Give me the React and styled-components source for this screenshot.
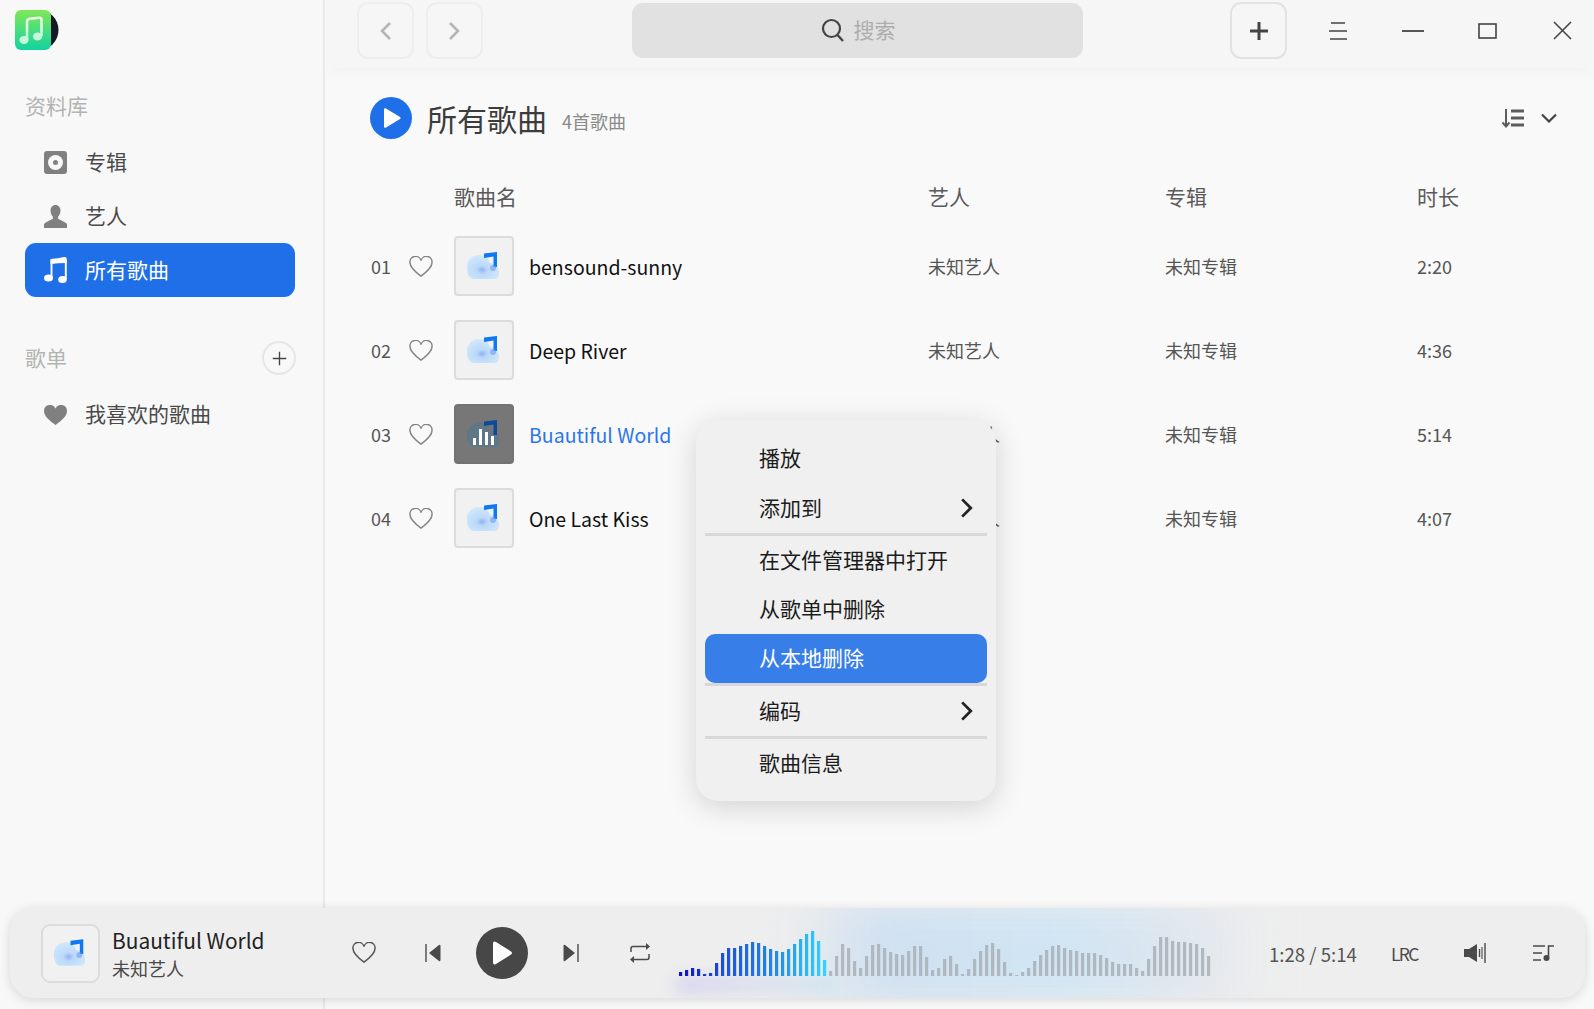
import React from 'react';
import styled, { createGlobalStyle } from 'styled-components';

const GlobalStyle = createGlobalStyle`
  html, body { margin: 0; height: 100%; overflow: hidden; }
  body { font-family: "Noto Sans CJK SC", "Noto Sans", sans-serif; background: #f9f9f9; color: #111; }
  * { box-sizing: border-box; }
`;

const Page = styled.div`
  position: relative;
  display: grid;
  grid-template-columns: 326px 1fr;
  width: 1594px;
  height: 1009px;
  overflow: hidden;
`;

/* sidebar */
const Sidebar = styled.aside`
  margin-right: 1px;
  background: #f8f8f8;
  border-right: 2px solid #e9e9e9;
  padding: 10px 0 0 25px;
`;
const Logo = styled.div`
  height: 40px;
  margin-left: -10px;
  margin-bottom: 42px;
`;
const SectionLabel = styled.div`
  height: 30px;
  line-height: ${p => p.$line || 27}px;
  font-size: 21px;
  color: #b3b3b3;
`;
const SectionRow = styled.div`
  display: flex;
  align-items: center;
  justify-content: space-between;
  width: 271px;
  height: 34px;
  margin-top: 44px;
`;
const AddRound = styled.div`
  width: 34px;
  height: 34px;
  border-radius: 50%;
  border: 2px solid #e6e6e6;
  display: flex;
  align-items: center;
  justify-content: center;
`;
const NavList = styled.nav`
  margin-top: 13px;
`;
const NavItem = styled.div`
  display: flex;
  align-items: center;
  gap: 18px;
  width: 270px;
  height: 54px;
  padding-left: 19px;
  border-radius: 11px;
  font-size: 21px;
  color: ${p => (p.$active ? '#fff' : '#4a4a4a')};
  background: ${p => (p.$active ? '#1f6fe8' : 'transparent')};
`;
const NavText = styled.span`
  margin-top: ${p => p.$lift || -3}px;
`;

/* main column */
const Main = styled.main`
  min-width: 0;
  overflow: hidden;
`;
const TopBar = styled.header`
  display: flex;
  align-items: flex-start;
  height: 68px;
  padding: 2px 0 0 31px;
  background: #f6f6f6;
  box-shadow: 0 4px 14px rgba(0, 0, 0, 0.035);
`;
const NavButton = styled.div`
  width: 57px;
  height: 57px;
  flex: none;
  margin-left: ${p => p.$gap || 0}px;
  border: 2px solid ${p => (p.$strong ? '#e2e2e2' : '#eeeeee')};
  border-radius: 11px;
  display: flex;
  align-items: center;
  justify-content: center;
`;
const SearchBox = styled.div`
  width: 451px;
  height: 55px;
  flex: none;
  margin: 1px 147px 0 149px;
  border-radius: 11px;
  background: #e1e1e1;
  display: flex;
  align-items: center;
  justify-content: center;
  gap: 9px;
  padding-left: 1px;
  font-size: 21px;
  color: #adadad;
`;
const SearchText = styled.span`
  margin-top: -3px;
`;
const WinButton = styled.div`
  width: 75px;
  height: 57px;
  flex: none;
  margin-left: ${p => p.$gap || 0}px;
  display: flex;
  align-items: center;
  justify-content: center;
`;
const TitleRow = styled.div`
  display: flex;
  align-items: center;
  height: 42px;
  margin-top: 29px;
  padding: 0 37px 0 44px;
`;
const PlayAll = styled.div`
  width: 42px;
  height: 42px;
  border-radius: 50%;
  background: #1f6fe8;
  display: flex;
  align-items: center;
  justify-content: center;
  padding-left: 3px;
  margin-right: 15px;
`;
const PageTitle = styled.h1`
  margin: 0 15px 0 0;
  font-size: 30px;
  font-weight: 400;
  color: #3c3c3c;
`;
const SongCount = styled.span`
  margin-top: 6px;
  font-size: 18px;
  color: #8a8a8a;
`;
const SortBox = styled.div`
  margin-left: auto;
  display: flex;
  align-items: center;
  gap: 16px;
`;
const HeadRow = styled.div`
  display: grid;
  grid-template-columns: 474px 237px 252px 1fr;
  height: 30px;
  margin: 44px 0 11px;
  padding-left: 128px;
  line-height: 27px;
  font-size: 21px;
  color: #5a5a5a;
`;
const SongRow = styled.div`
  display: grid;
  grid-template-columns: 38px 45px 75px 399px 237px 252px 1fr;
  align-items: center;
  height: 84px;
  padding-left: 45px;
  font-size: 18px;
  color: #555;
  & > svg {
    margin-top: 2px;
  }
`;
const Cell = styled.div`
  margin-top: -1px;
`;
const SongTitle = styled.div`
  font-size: 19.5px;
  color: ${p => (p.$playing ? '#2a75ee' : '#111')};
`;
const Cover = styled.div`
  width: ${p => p.$size || 60}px;
  height: ${p => p.$size || 60}px;
  flex: none;
  border-radius: ${p => (p.$round ? 9 : 4)}px;
  border: 2px solid ${p => (p.$playing ? '#737373' : '#dcdcdc')};
  background: ${p => (p.$playing ? '#777777' : '#f1f1f1')};
  display: flex;
  align-items: center;
  justify-content: center;
`;

/* context menu */
const Menu = styled.div`
  position: absolute;
  left: 696px;
  top: 420px;
  width: 300px;
  height: 381px;
  padding: 14px 9px 12px;
  border-radius: 22px;
  background: #f0f0f0;
  box-shadow: 0 6px 30px rgba(0, 0, 0, 0.16);
`;
const MenuItem = styled.div`
  display: flex;
  align-items: center;
  justify-content: space-between;
  height: ${p => p.$height || 49}px;
  padding: 0 13px 0 54px;
  border-radius: 10px;
  font-size: 21px;
  color: ${p => (p.$active ? '#fff' : '#1c1c1c')};
  background: ${p => (p.$active ? '#387ee8' : 'transparent')};
`;
const MenuText = styled.span`
  margin-top: -3px;
`;
const MenuLine = styled.div`
  height: 3px;
  background: #d8d8d8;
`;

/* player */
const Player = styled.footer`
  position: absolute;
  left: 10px;
  top: 908px;
  width: 1575px;
  height: 90px;
  display: flex;
  align-items: center;
  padding-left: 31px;
  border-radius: 24px;
  background: #eeeeee;
  box-shadow: 0 2px 12px rgba(0, 0, 0, 0.14);
  overflow: hidden;
`;
const Glow = styled.div`
  position: absolute;
  left: ${p => p.$left}px;
  top: ${p => p.$top}px;
  width: ${p => p.$width}px;
  height: ${p => p.$height}px;
  background: ${p => p.$bg};
  filter: blur(${p => p.$blur}px);
`;
const TrackInfo = styled.div`
  position: relative;
  width: 217px;
  margin-left: 12px;
  flex: none;
`;
const TrackName = styled.div`
  font-size: 20.9px;
  line-height: 30px;
  color: #222;
`;
const TrackArtist = styled.div`
  font-size: 18px;
  line-height: 26px;
  color: #4a4a4a;
`;
const Control = styled.div`
  position: relative;
  width: 69px;
  flex: none;
  display: flex;
  justify-content: center;
`;
const PlayButton = styled.div`
  width: 52px;
  height: 52px;
  border-radius: 50%;
  background: #474747;
  display: flex;
  align-items: center;
  justify-content: center;
  padding-left: 3px;
`;
const Wave = styled.svg`
  position: relative;
  flex: none;
  margin-left: 5px;
`;
const TimeText = styled.div`
  position: relative;
  flex: none;
  width: 86px;
  margin-left: 56px;
  font-size: 18.6px;
  color: #555;
  white-space: nowrap;
`;
const LrcText = styled.div`
  position: relative;
  flex: none;
  width: 25px;
  margin-left: 36px;
  font-size: 17.5px;
  color: #4a4a4a;
  letter-spacing: -1.7px;
  white-space: nowrap;
`;
const PlayerIcon = styled.div`
  position: relative;
  flex: none;
  display: flex;
  margin-left: ${p => p.$gap}px;
`;

/* drawings */
const LogoIcon = () => (
  <svg width="46" height="40" viewBox="0 0 46 40">
    <defs>
      <linearGradient id="logoFill" x1="0" y1="0" x2="0" y2="1">
        <stop offset="0" stopColor="#7fe858" />
        <stop offset="1" stopColor="#12d3a0" />
      </linearGradient>
      <linearGradient id="logoNote" x1="0" y1="0" x2="0" y2="1">
        <stop offset="0" stopColor="#f0fdea" />
        <stop offset="1" stopColor="#bdf3dc" />
      </linearGradient>
    </defs>
    <circle cx="23.5" cy="20" r="20" fill="#141a24" />
    <rect width="36" height="40" rx="6" fill="url(#logoFill)" />
    <path d="M12 30V12q0-3 3-3.300l9-1q2.500-.2 2.500 2.300V26" fill="none" stroke="url(#logoNote)" strokeWidth="2.600" />
    <ellipse cx="9" cy="30" rx="4.600" ry="4" fill="#c8f5de" />
    <ellipse cx="22.500" cy="26.500" rx="4.600" ry="4" fill="#c8f5de" />
  </svg>
);
const DiscIcon = () => (
  <svg width="23" height="23" viewBox="0 0 23 23">
    <rect width="23" height="23" rx="3" fill="#808080" />
    <circle cx="11.500" cy="11.500" r="7.500" fill="#f8f8f8" />
    <circle cx="11.500" cy="11.500" r="2.500" fill="#808080" />
  </svg>
);
const PersonIcon = () => (
  <svg width="23" height="23" viewBox="0 0 23 23">
    <path d="M11.500 0c3.200 0 5 2.500 5 5.600 0 2.600-1 4.800-2.400 6.100v1.500c0 1.300 5.300 2.300 8.400 5.300 1 1 1 2.500 1 4.500H-.5c0-2 0-3.500 1-4.500 3.100-3 8.400-4 8.400-5.300v-1.500C7.500 10.400 6.500 8.200 6.500 5.600c0-3.100 1.800-5.600 5-5.600z" fill="#808080" />
  </svg>
);
const NoteIcon = () => (
  <svg width="23" height="26" viewBox="0 0 23 26">
    <path d="M7.500 3v18M21.800 3v19" fill="none" stroke="#fff" strokeWidth="1.900" />
    <path d="M6.500 2Q14 1.500 20 0q2.800-.2 2.800 2v4Q14 6 6.500 7z" fill="#fff" />
    <ellipse cx="4.500" cy="21" rx="4.500" ry="3.600" fill="#fff" />
    <ellipse cx="18.500" cy="22.400" rx="4.300" ry="3.500" fill="#fff" />
  </svg>
);
const HeartFill = () => (
  <svg width="23" height="20" viewBox="0 0 23 20">
    <path d="M11.500 20C4 14.500 0 10.500 0 6a6 6 0 0 1 11.500-2.400A6 6 0 0 1 23 6c0 4.500-4 8.500-11.500 14z" fill="#808080" />
  </svg>
);
const HeartLine = ({ size = 24, color = '#858585' }) => (
  <svg width={size} height={size * 0.88} viewBox="0 0 24 21">
    <path d="M12 20C5 14.800 1 11 1 6.600A5.600 5.600 0 0 1 12 4.600 5.600 5.600 0 0 1 23 6.600C23 11 19 14.800 12 20z" fill="none" stroke={color} strokeWidth="1.500" />
  </svg>
);
const Plus = ({ size = 20, color = '#444', weight = 3 }) => (
  <svg width={size} height={size} viewBox="0 0 20 20">
    <path d="M10 1v18M1 10h18" stroke={color} strokeWidth={weight} />
  </svg>
);
const Chevron = ({ dir = 'right', color = '#b5b5b5', w = 13, h = 20, weight = 2.600 }) => (
  <svg width={w} height={h} viewBox="0 0 13 20">
    <path d={dir === 'left' ? 'M11 2L3 10l8 8' : 'M2 2l8 8-8 8'} fill="none" stroke={color} strokeWidth={weight} />
  </svg>
);
const SearchIcon = () => (
  <svg width="24" height="25" viewBox="0 0 24 25">
    <circle cx="10.500" cy="10.500" r="8.500" fill="none" stroke="#444" strokeWidth="2.200" />
    <path d="M16.500 17l5.500 6" stroke="#444" strokeWidth="2.400" />
  </svg>
);
const MenuIcon = () => (
  <svg width="20" height="18" viewBox="0 0 20 18">
    <path d="M3 1h14M1 9h18M2 17h17" stroke="#444" strokeWidth="1.600" />
  </svg>
);
const MinIcon = () => (
  <svg width="22" height="4" viewBox="0 0 22 4">
    <path d="M0 2h22" stroke="#444" strokeWidth="1.800" />
  </svg>
);
const MaxIcon = () => (
  <svg width="19" height="16" viewBox="0 0 19 16">
    <rect x="1" y="1" width="17" height="14" fill="none" stroke="#444" strokeWidth="1.600" />
  </svg>
);
const CloseIcon = () => (
  <svg width="19" height="19" viewBox="0 0 19 19">
    <path d="M1 1l17 17M18 1L1 18" stroke="#444" strokeWidth="1.600" />
  </svg>
);
const SortIcon = () => (
  <svg width="24" height="20" viewBox="0 0 24 20">
    <path d="M5 1v17M1.500 14.500L5 18.500l3.500-4" fill="none" stroke="#5c5c5c" strokeWidth="2" />
    <path d="M10 3h13M10 10h13M10 17h13" stroke="#5c5c5c" strokeWidth="3" />
  </svg>
);
const DownIcon = () => (
  <svg width="16" height="10" viewBox="0 0 16 10">
    <path d="M1 1.500l7 7 7-7" fill="none" stroke="#444" strokeWidth="2.200" />
  </svg>
);
const CloudArt = ({ playing, idPrefix }) => (
  <svg width="56" height="56" viewBox="2 2 56 56">
    <defs>
      <radialGradient id={`${idPrefix}Cloud`} cx="0.470" cy="0.620" r="0.680">
        <stop offset="0" stopColor="#8fb0f4" />
        <stop offset="0.250" stopColor="#bcd8f9" />
        <stop offset="1" stopColor="#d2ebfc" />
      </radialGradient>
    </defs>
    <path d="M20 43C15 43 13 37 13 31 13 24 18 19 25 19 31 19 34 22 36 27 41 27 45 31 45 37 45 41 43 43 40 43Z" fill={playing ? '#5e7887' : `url(#${idPrefix}Cloud)`} />
    <path d="M30 17.500l13-1.500V31h-3.500v-10.500L30 22z" fill={playing ? '#0d4a98' : '#0d78f2'} />
    {playing ? (
      <path d="M19 41v-7h3v7zM25 41V25h3v16zM31 41V28h3v13zM37 41V32h3v9z" fill="#fff" />
    ) : (
      <circle cx="39" cy="32" r="3" fill="#6c9cf0" opacity="0.600" />
    )}
  </svg>
);
const PrevIcon = () => (
  <svg width="16" height="18" viewBox="0 0 16 18">
    <path d="M1 0v18" stroke="#4a4a4a" strokeWidth="1.400" />
    <path d="M4 9l10-8q1.500-.6 1.500 1v14q0 1.600-1.500 1z" fill="#4a4a4a" />
  </svg>
);
const NextIcon = () => (
  <svg width="16" height="18" viewBox="0 0 16 18">
    <path d="M15 0v18" stroke="#4a4a4a" strokeWidth="1.400" />
    <path d="M12 9L2 1Q.5.400.5 2v14q0 1.600 1.500 1z" fill="#4a4a4a" />
  </svg>
);
const RepeatIcon = () => (
  <svg width="20" height="20" viewBox="0 0 20 20">
    <path d="M1 9V5.500q0-2 2-2h15M19 11v3.500q0 2-2 2H2" fill="none" stroke="#4a4a4a" strokeWidth="1.500" />
    <path d="M16 0l4 3.500-4 3.500zM4 13l-4 3.500L4 20z" fill="#4a4a4a" />
  </svg>
);
const VolumeIcon = () => (
  <svg width="22" height="20" viewBox="0 0 22 20">
    <path d="M0 6h5l8-5v18l-8-5H0z" fill="#4a4a4a" />
    <path d="M15.500 6v8M21 0v20" stroke="#4a4a4a" strokeWidth="1.400" />
    <path d="M18 4v12" stroke="#4a4a4a" strokeWidth="1.100" />
  </svg>
);
const QueueIcon = () => (
  <svg width="21" height="16" viewBox="0 0 21 16">
    <path d="M0 1h12M0 8h9M0 15h8" stroke="#4a4a4a" strokeWidth="1.500" />
    <path d="M15.500 12V1H21" fill="none" stroke="#4a4a4a" strokeWidth="1.600" />
    <circle cx="13.500" cy="13" r="3" fill="#4a4a4a" />
  </svg>
);

const waveHeights = [
  4, 6, 8, 7, 2, 3, 13, 23, 28, 28, 30, 32, 34, 33, 30, 27, 25, 24, 27, 32, 37, 42, 45, 35, 16,
  5, 20, 32, 28, 15, 8, 20, 31, 32, 28, 24, 22, 21, 25, 30, 30, 19, 6, 8, 17, 20, 12, 2, 7, 17,
  25, 31, 33, 27, 14, 3, 1, 4, 8, 15, 21, 26, 30, 31, 28, 26, 25, 23, 23, 23, 21, 18, 14, 12, 12,
  12, 8, 5, 17, 30, 39, 39, 35, 34, 34, 33, 32, 28, 20,
];
const playedBars = 25;

const WaveForm = () => (
  <Wave width="534" height="50" viewBox="0 0 534 50">
    <defs>
      <linearGradient id="wavePlayed" gradientUnits="userSpaceOnUse" x1="0" y1="0" x2="147" y2="0">
        <stop offset="0" stopColor="#0e10c6" />
        <stop offset="0.300" stopColor="#1a4fe0" />
        <stop offset="0.650" stopColor="#2088ec" />
        <stop offset="1" stopColor="#30d6ff" />
      </linearGradient>
    </defs>
    {waveHeights.map((h, i) => (
      <rect
        key={i}
        x={i * 6}
        y={48 - h}
        width="3.200"
        height={h}
        fill={i < playedBars ? 'url(#wavePlayed)' : '#a9afb6'}
        fillOpacity={i < playedBars ? 1 : 0.85}
      />
    ))}
  </Wave>
);

const songs = [
  { no: '01', title: 'bensound-sunny', time: '2:20' },
  { no: '02', title: 'Deep River', time: '4:36' },
  { no: '03', title: 'Buautiful World', time: '5:14', playing: true },
  { no: '04', title: 'One Last Kiss', time: '4:07' },
];

const menuChevron = <Chevron color="#222" w={14} h={22} weight={2.600} />;

const App = () => (
  <Page>
    <GlobalStyle />
    <Sidebar>
      <Logo><LogoIcon /></Logo>
      <SectionLabel>资料库</SectionLabel>
      <NavList>
        <NavItem><DiscIcon /><NavText>专辑</NavText></NavItem>
        <NavItem><PersonIcon /><NavText>艺人</NavText></NavItem>
        <NavItem $active><NoteIcon /><NavText>所有歌曲</NavText></NavItem>
      </NavList>
      <SectionRow>
        <SectionLabel $line={29}>歌单</SectionLabel>
        <AddRound><Plus size={15} color="#444" weight={1.800} /></AddRound>
      </SectionRow>
      <NavList>
        <NavItem><HeartFill /><NavText $lift={-5}>我喜欢的歌曲</NavText></NavItem>
      </NavList>
    </Sidebar>

    <Main>
      <TopBar>
        <NavButton><Chevron dir="left" /></NavButton>
        <NavButton $gap={12}><Chevron /></NavButton>
        <SearchBox><SearchIcon /><SearchText>搜索</SearchText></SearchBox>
        <NavButton $strong><Plus /></NavButton>
        <WinButton $gap={13}><MenuIcon /></WinButton>
        <WinButton><MinIcon /></WinButton>
        <WinButton><MaxIcon /></WinButton>
        <WinButton><CloseIcon /></WinButton>
      </TopBar>

      <TitleRow>
        <PlayAll>
          <svg width="18" height="22" viewBox="0 0 18 22">
            <path d="M2 1.500L16 10q1.500 1 0 2L2 20.500Q0 21.500 0 19.500V2.500Q0 .5 2 1.500z" fill="#fff" />
          </svg>
        </PlayAll>
        <PageTitle>所有歌曲</PageTitle>
        <SongCount>4首歌曲</SongCount>
        <SortBox><SortIcon /><DownIcon /></SortBox>
      </TitleRow>

      <HeadRow>
        <div>歌曲名</div>
        <div>艺人</div>
        <div>专辑</div>
        <div>时长</div>
      </HeadRow>

      {songs.map(song => (
        <SongRow key={song.no}>
          <Cell>{song.no}</Cell>
          <HeartLine />
          <Cover $playing={song.playing}>
            <CloudArt playing={song.playing} idPrefix={`row${song.no}`} />
          </Cover>
          <SongTitle $playing={song.playing}>{song.title}</SongTitle>
          <Cell>未知艺人</Cell>
          <Cell>未知专辑</Cell>
          <Cell>{song.time}</Cell>
        </SongRow>
      ))}
    </Main>

    <Menu>
      <MenuItem><MenuText>播放</MenuText></MenuItem>
      <MenuItem $height={50}><MenuText>添加到</MenuText>{menuChevron}</MenuItem>
      <MenuLine />
      <MenuItem><MenuText>在文件管理器中打开</MenuText></MenuItem>
      <MenuItem><MenuText>从歌单中删除</MenuText></MenuItem>
      <MenuItem $active><MenuText>从本地删除</MenuText></MenuItem>
      <MenuLine />
      <MenuItem $height={50}><MenuText>编码</MenuText>{menuChevron}</MenuItem>
      <MenuLine />
      <MenuItem><MenuText>歌曲信息</MenuText></MenuItem>
    </Menu>

    <Player>
      <Glow $left={780} $top={-10} $width={470} $height={110} $blur={24} $bg="linear-gradient(90deg, transparent, #cfe0f1 18%, #d0e5f3 60%, #dfe6ee 85%, transparent)" />
      <Glow $left={666} $top={70} $width={160} $height={14} $blur={8} $bg="linear-gradient(90deg, #cfcfee, #d6dcee 50%, #cce6ef)" />
      <Cover $size={59} $round>
        <CloudArt idPrefix="player" />
      </Cover>
      <TrackInfo>
        <TrackName>Buautiful World</TrackName>
        <TrackArtist>未知艺人</TrackArtist>
      </TrackInfo>
      <Control><HeartLine size={24} color="#555" /></Control>
      <Control><PrevIcon /></Control>
      <Control>
        <PlayButton>
          <svg width="20" height="24" viewBox="0 0 20 24">
            <path d="M3 1l15 9.500q2 1.500 0 3L3 23q-3 1.500-3-1.500v-19Q0-.5 3 1z" fill="#fff" />
          </svg>
        </PlayButton>
      </Control>
      <Control><NextIcon /></Control>
      <Control><RepeatIcon /></Control>
      <WaveForm />
      <TimeText>1:28 / 5:14</TimeText>
      <LrcText>LRC</LrcText>
      <PlayerIcon $gap={48}><VolumeIcon /></PlayerIcon>
      <PlayerIcon $gap={47}><QueueIcon /></PlayerIcon>
    </Player>
  </Page>
);

export default App;
